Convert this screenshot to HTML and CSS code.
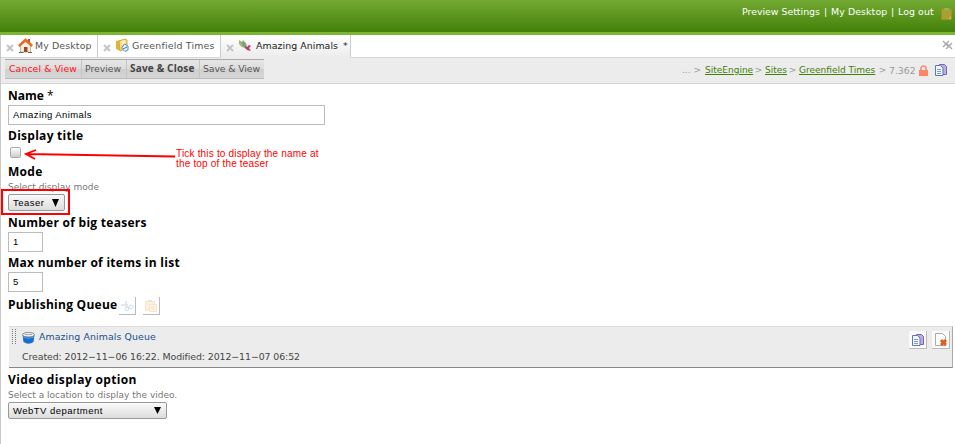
FILE: index.html
```html
<!DOCTYPE html>
<html lang="en">
<head>
<meta charset="utf-8">
<title>Amazing Animals</title>
<link rel="stylesheet" href="styles.css">
</head>
<body>
<svg class="defs" width="0" height="0">
  <symbol id="pages" viewBox="0 0 14 14">
    <path d="M5.500 1.500h5l2 2v8h-7z" fill="#b9aee0" stroke="#7a66b0"/>
    <path d="M1.500 2.500h5l2.500 2.500v7.500h-7.500z" fill="#eef5ff" stroke="#6277a8"/>
    <path d="M3 6.500h4M3 8.500h4M3 10.500h4" stroke="#7f9ccb"/>
  </symbol>
  <symbol id="close" viewBox="0 0 8 8">
    <path d="M1 1l6 6M7 1L1 7" stroke="#c4c4c4" stroke-width="2"/>
  </symbol>
</svg>
<header class="top">
  <nav><span class="t1">Preview Settings</span><i>|</i><span class="t2">My Desktop</span><i>|</i><span class="t3">Log out</span></nav>
  <svg class="clip" width="11" height="13" viewBox="0 0 11 13"><path d="M.5 2h10v10.500H.5z" fill="#a9a032" stroke="#a48c26"/><path d="M3 1h5v2H3z" fill="#91b067"/><path d="M7 12l3-3v3z" fill="#c6b650"/></svg>
</header>
<main class="page">
  <div class="tabs">
    <div class="tab tab-a"><svg class="x" width="8" height="8"><use href="#close"/></svg>
      <svg class="ico" width="15" height="15" viewBox="0 0 15 15"><path d="M2.500 7v7h10V7L7.500 3z" fill="#f5eee2" stroke="#c9b79e"/><path d="M10 1h2v4h-2z" fill="#b4552c"/><path d="M.8 8L7.500 2l6.700 6" fill="none" stroke="#e56a26" stroke-width="2.500"/><path d="M6 9h3.500v5H6z" fill="#9b4a20"/><path d="M1 14.500h4.500M10 14.500h4" stroke="#5b7045"/></svg>
      <span>My Desktop</span></div>
    <div class="tab tab-b"><svg class="x" width="8" height="8"><use href="#close"/></svg>
      <svg class="ico" width="14" height="14" viewBox="0 0 14 14"><path d="M1 3l4-1v11l-4-2z" fill="#e3b33b"/><path d="M4 3l6-2 2 1v8l-7 3z" fill="#f8dd83" stroke="#d6a93e"/><path d="M7 3l3-1v3L7 7z" fill="#fff2bd"/><path d="M6.500 10l3-4 3.500 2v4l-3 1.500z" fill="#eaf4ff" stroke="#4b8bcb"/><path d="M8 11l4-2" stroke="#3c77ba"/></svg>
      <span>Greenfield Times</span></div>
    <div class="tab tab-c"><svg class="x" width="8" height="8"><use href="#close"/></svg>
      <svg class="ico" width="13" height="13" viewBox="0 0 13 13"><path d="M1 1l3 2 1-2 3 3 1 3-2 2-3-1-3-3z" fill="#8fb56c"/><path d="M4 3l2 1 2 4-3-1z" fill="#58a0b6"/><path d="M1 4l3 3" stroke="#d6b453" stroke-width="1.500"/><path d="M7 7l2 1 2-2 2 1-2 2 2 3-4-1-2-2z" fill="#c03a6b"/></svg>
      <span>Amazing Animals</span><b>*</b></div>
    <div class="rest"><svg width="11" height="10" viewBox="0 0 11 10"><path d="M1 1l6 6M7 1L1 7M5 4l5 5M10 3L4 9" stroke="#aaa" stroke-width="1.500"/></svg></div>
  </div>
  <div class="bar">
    <div class="actions"><span class="act red">Cancel &amp; View</span><span class="act prev">Preview</span><span class="act strong">Save &amp; Close</span><span class="act sv">Save &amp; View</span></div>
    <div class="crumbs"><span class="dots">... &gt;</span><a class="c1">SiteEngine</a><em>&gt;</em><a class="c2">Sites</a><em>&gt;</em><a class="c3">Greenfield Times</a><em>&gt;</em><span class="num">7.362</span>
      <svg class="lock" width="9" height="11" viewBox="0 0 9 11"><path d="M2 5V3a2.500 2 0 015 0v2" fill="none" stroke="#ff8a70" stroke-width="1.600"/><path d="M0 5h9v6H0z" fill="#ff8568"/></svg>
      <svg width="14" height="14"><use href="#pages"/></svg></div>
  </div>
  <form class="form">
    <h2 class="h-name">Name <small>*</small></h2>
    <div class="field wide">Amazing Animals</div>
    <h2>Display title</h2>
    <div class="check">
      <span class="box"></span>
      <svg class="arrow" width="152" height="12" viewBox="0 0 152 12"><path d="M151 7.500L2 5M12 1L2 5l9 5" fill="none" stroke="#f00" stroke-width="1.800"/></svg>
      <p class="note">Tick this to display the name at<br>the top of the teaser</p>
    </div>
    <h2>Mode</h2>
    <p class="hint">Select display mode</p>
    <div class="select teaser"><span>Teaser</span><svg width="7" height="8"><path d="M0 0h7L3.500 8z"/></svg><i class="mark"></i></div>
    <h2>Number of big teasers</h2>
    <div class="field tiny">1</div>
    <h2>Max number of items in list</h2>
    <div class="field tiny">5</div>
    <div class="queue-head"><h2>Publishing Queue</h2>
      <span class="btn"><svg width="13" height="12" viewBox="0 0 13 12"><path d="M0 5h7M5 1v5l3 2" fill="none" stroke="#dde0e4" stroke-width="1.500"/><circle cx="6" cy="9" r="1.700" fill="none" stroke="#c8def5"/><circle cx="10" cy="7" r="2" fill="none" stroke="#c8def5"/></svg></span>
      <span class="btn"><svg width="12" height="13" viewBox="0 0 12 13"><path d="M.5 2.500h9v9h-9z" fill="#fdf0da" stroke="#f8e6ca"/><path d="M3 1h4v2H3z" fill="#e1e4eb"/><path d="M4.500 5.500h7v7h-7z" fill="#fff7ea" stroke="#f7e3c8"/><path d="M6 8h4M6 10h4" stroke="#f5dcc0"/></svg></span></div>
    <section class="card">
      <div class="grip"></div>
      <div class="info">
        <div class="name"><svg width="13" height="12" viewBox="0 0 13 12"><path d="M.5 3l1 7q5 3.500 10 0l1-7z" fill="#176fcd"/><path d="M1 5q5 3 11 0" fill="none" stroke="#4c9df0"/><ellipse cx="6.500" cy="2.700" rx="6" ry="2.300" fill="#eee" stroke="#888"/><path d="M3 2.500h7" stroke="#aaa"/></svg><span>Amazing Animals Queue</span></div>
        <p>Created: 2012−11−06 16:22. Modified: 2012−11−07 06:52</p>
      </div>
      <span class="btn"><svg width="14" height="14"><use href="#pages"/></svg></span>
      <span class="btn"><svg width="13" height="14" viewBox="0 0 13 14"><path d="M1.500.5h7l3 3v9h-10z" fill="#fff" stroke="#aaa"/><path d="M7 7l5 5M12 7l-5 5" stroke="#df6118" stroke-width="3"/></svg></span>
    </section>
    <h2 class="h-video">Video display option</h2>
    <p class="hint">Select a location to display the video.</p>
    <div class="select web"><span>WebTV department</span><svg width="7" height="7"><path d="M0 0h7L3.500 7z"/></svg></div>
  </form>
</main>
</body>
</html>
```
FILE: styles.css
```css
* { box-sizing: border-box; }
body { margin: 0; height: 444px; overflow: hidden; background: #fff; font: 9.4px "DejaVu Sans", sans-serif; color: #444; white-space: nowrap; }
h2, p { margin: 0; }
i, em { font-style: normal; }
svg { display: block; flex: none; }
.defs { position: absolute; }
.top { height: 35px; border-bottom: 3px solid #7db433; background: linear-gradient(#73aa34, #438009); display: flex; justify-content: flex-end; padding: 6px 3px 0 0; color: #fff; }
.top nav { display: flex; line-height: 12px; margin-right: 7px; }
.top i { width: 11px; text-align: center; }
.t1 { width: 78px; }
.t2 { width: 56px; letter-spacing: .1px; }
.t3 { width: 36px; letter-spacing: .1px; }
.clip { margin-top: 1px; }
.page { border-left: 1px solid #c9c9c9; height: 409px; }
.tabs { display: flex; height: 23px; }
.tab { display: flex; align-items: center; border-right: 1px solid #ccc; border-bottom: 1px solid #d7d7d7; padding-left: 5px; padding-bottom: 1px; color: #555; letter-spacing: .13px; }
.tab .x { margin-top: 4px; }
.tab .ico { margin: -1px 3px 0 4px; }
.tab-a { width: 97px; }
.tab-a .ico { margin-right: 2px; }
.tab-b { width: 123px; letter-spacing: .2px; }
.tab-c { width: 130px; color: #222; border-bottom-color: #ececec; background: linear-gradient(#fff, #ececec); letter-spacing: .07px; }
.tab-c .ico { margin-right: 5px; }
.tab-c b { font-weight: 400; margin-left: 5px; }
.rest { flex: 1; border-bottom: 1px solid #d7d7d7; display: flex; justify-content: flex-end; padding: 5px 2px 0 0; }
.bar { height: 26px; background: #ececec; border-bottom: 1px solid #d5d5d5; display: flex; justify-content: space-between; }
.actions { display: flex; height: 20px; margin: 1px 0 0 4px; background: linear-gradient(#e6e6e6, #dcdcdc 50%, #d0d0d0 51%, #d5d5d5); border-top: 1px solid #aaa; border-bottom: 1px solid #bbb; }
.act { padding-left: 4px; line-height: 18px; border-right: 1px solid #c5c5c5; color: #555; font-size: 9.3px; }
.red { width: 77px; color: #ff1020; letter-spacing: .1px; }
.prev { width: 45px; padding-left: 3px; }
.strong { width: 73px; padding-left: 3px; font: 700 10px/17px "Open Sans", sans-serif; letter-spacing: .18px; color: #444; }
.sv { width: 64px; padding-left: 3px; border: 0; letter-spacing: -.1px; }
.crumbs { display: flex; align-items: center; height: 24px; padding-right: 7px; color: #999; font-size: 9px; }
.crumbs em { width: 13px; text-align: center; }
.crumbs a { color: #438009; text-decoration: underline; }
.dots { width: 23px; }
.c1 { width: 47px; }
.c2 { width: 21px; }
.c3 { width: 77px; }
.num { width: 26px; font-size: 9.3px; }
.lock { margin: 0 6px 0 4px; }
.form { padding: 1px 2px 0 7px; }
h2 { font: 700 12px/22px "Open Sans", sans-serif; height: 20px; color: #000; letter-spacing: .27px; }
h2 small { font: 400 12px/12px "Open Sans", sans-serif; }
.h-name { letter-spacing: 0; }
.h-video { letter-spacing: .36px; margin-top: 1px; }
.field { height: 20px; border: 1px solid #bbb; padding-left: 4px; font: 9.500px/18px "Liberation Sans", sans-serif; color: #000; }
.wide { width: 317px; letter-spacing: .4px; }
.tiny { width: 35px; }
.check { height: 16px; display: flex; }
.box { width: 11px; height: 11px; margin: 2px 0 0 2px; border: 1px solid #aaa; border-radius: 2px; background: linear-gradient(#fff, #ccc); }
.arrow { margin: 4px 0 0 3px; }
.note { color: red; font: 10px/10px "Liberation Sans", sans-serif; margin-top: 4px; letter-spacing: .18px; }
.hint { height: 13px; font: 9px/13px "DejaVu Sans", sans-serif; color: #777; }
.select { height: 17px; margin-bottom: 1px; border: 1px solid #999; border-radius: 2px; display: flex; align-items: center; justify-content: space-between; padding: 0 5px 0 4px; background: linear-gradient(#f9f9f9, #ddd); font: 9.500px "Liberation Sans", sans-serif; color: #000; position: relative; letter-spacing: .48px; }
.teaser { width: 57px; }
.web { width: 159px; }
.mark { position: absolute; left: -8px; top: -6px; width: 69px; height: 26px; border: 2px solid #f00; }
.queue-head { height: 34px; display: flex; }
.queue-head h2 { height: 25px; line-height: 25px; width: 111px; }
.btn { width: 18px; height: 18px; display: flex; align-items: center; justify-content: center; border-right: 1px solid #bbb; border-bottom: 1px solid #bbb; background: #fafafa; }
.queue-head .btn { margin: 5px 7px 0 0; width: 17px; background: #fff; }
.card { height: 42px; margin-left: 1px; background: #ececec; border-top: 1px solid #ddd; border-bottom: 1px solid #888; border-right: 1px solid #aaa; display: flex; padding: 0 2px 0 3px; }
.grip { width: 4px; height: 16px; margin: 1px 6px 0 0; background: repeating-linear-gradient(#ececec 0 1px, transparent 1px 2px), repeating-linear-gradient(90deg, #777 0 1px, #ececec 1px 3px); }
.info { flex: 1; }
.name { display: flex; height: 18px; align-items: center; color: #20508a; gap: 4px; letter-spacing: .1px; }
.name svg { margin-top: 3px; }
.info p { line-height: 23px; color: #444; letter-spacing: -.08px; }
.card .btn { margin: 4px 0 0 5px; }
```
